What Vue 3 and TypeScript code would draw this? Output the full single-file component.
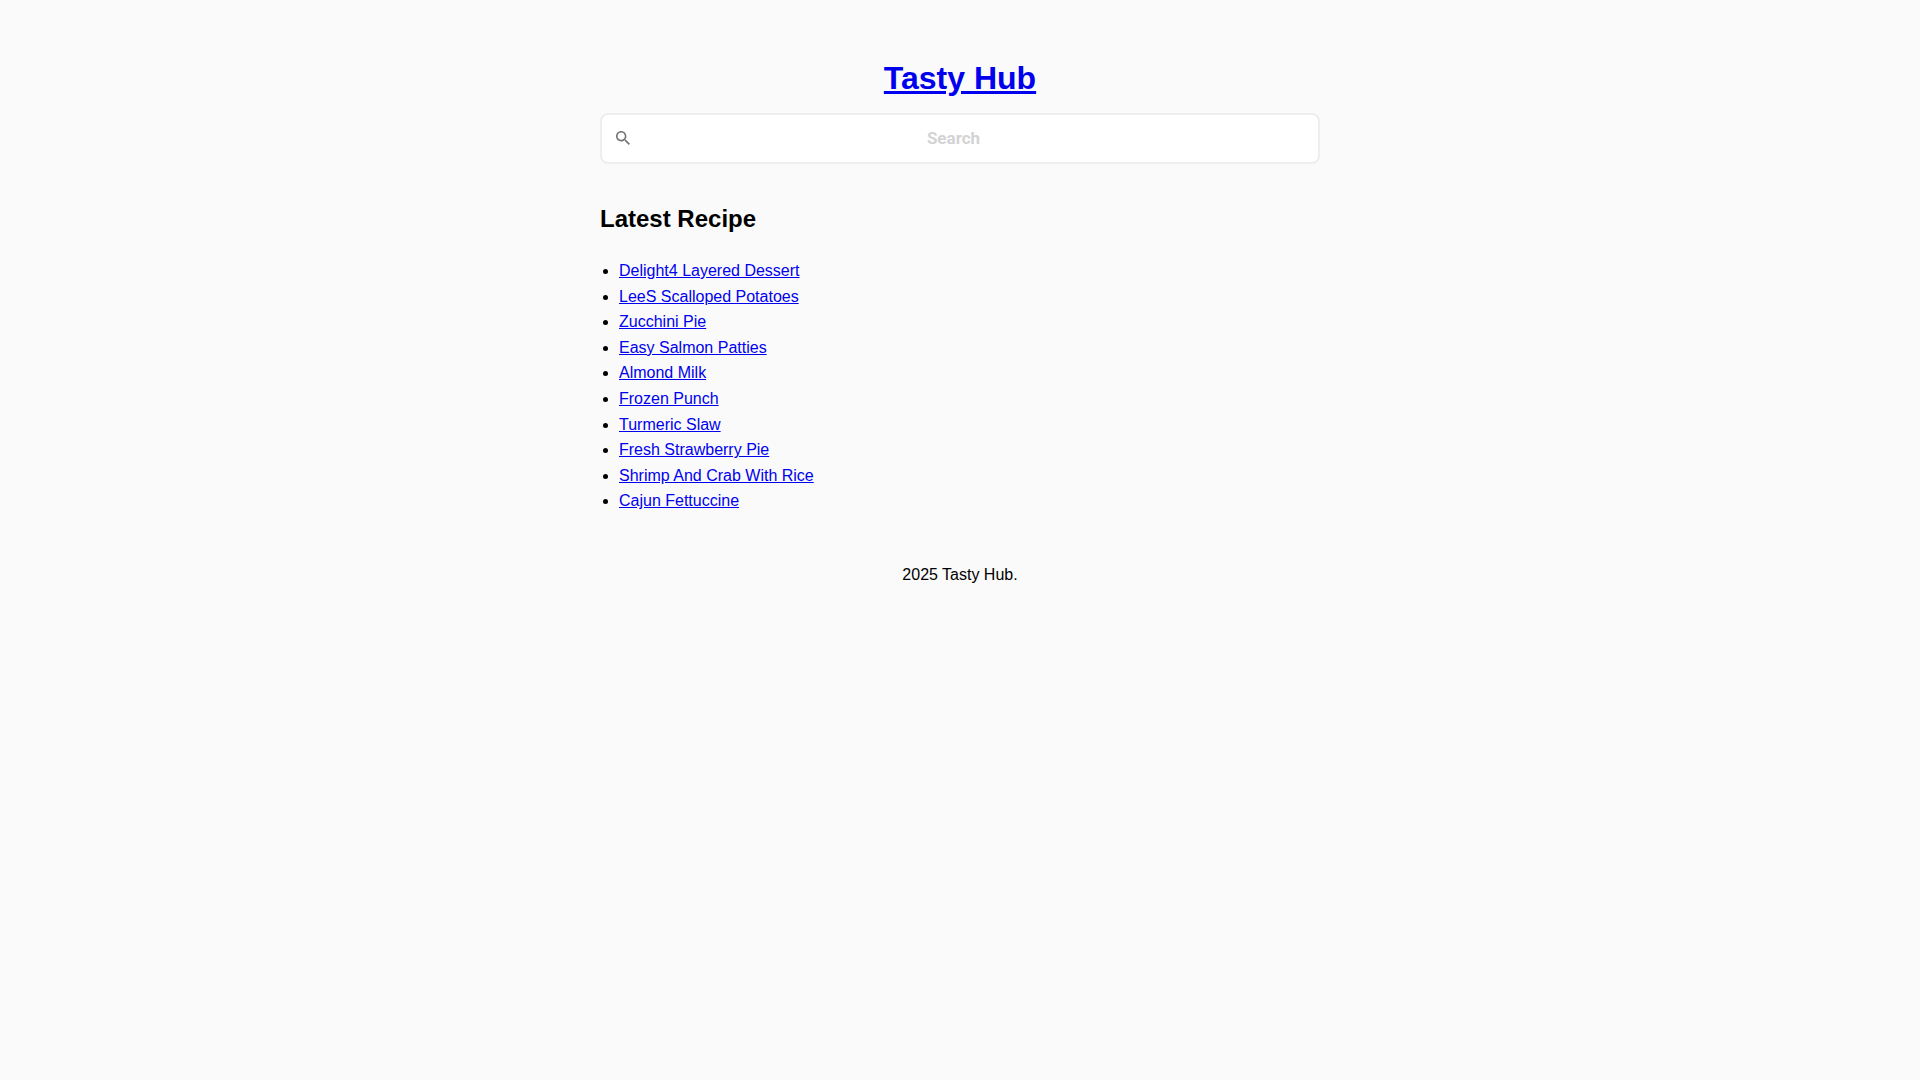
<script setup lang="ts">
import { ref } from 'vue'

const query = ref<string>('')
const recipes: string[] = [
  'Delight4 Layered Dessert',
  'LeeS Scalloped Potatoes',
  'Zucchini Pie',
  'Easy Salmon Patties',
  'Almond Milk',
  'Frozen Punch',
  'Turmeric Slaw',
  'Fresh Strawberry Pie',
  'Shrimp And Crab With Rice',
  'Cajun Fettuccine',
]
</script>

<template>
  <div class="page">
    <header>
      <h1 class="brand"><a href="#">Tasty Hub</a></h1>
      <form class="search" role="search" @submit.prevent>
        <button class="search-button" type="submit" aria-label="Submit search">
          <svg viewBox="3 3 17.49 17.49" width="14" height="14" aria-hidden="true">
            <path
              d="M15.5 14h-.79l-.28-.27C15.41 12.59 16 11.11 16 9.5 16 5.91 13.09 3 9.5 3S3 5.91 3 9.5 5.91 16 9.5 16c1.61 0 3.09-.59 4.23-1.57l.27.28v.79l5 4.99L20.49 19l-4.99-5zm-6 0C7.01 14 5 11.99 5 9.5S7.01 5 9.5 5 14 7.01 14 9.5 11.99 14 9.5 14z"
            />
          </svg>
        </button>
        <input v-model="query" class="search-input" type="text" placeholder="Search" aria-label="Search" />
      </form>
    </header>
    <main>
      <h2 class="heading">Latest Recipe</h2>
      <ul class="recipes">
        <li v-for="recipe in recipes" :key="recipe"><a href="#">{{ recipe }}</a></li>
      </ul>
    </main>
    <footer class="footer">2025 Tasty Hub.</footer>
  </div>
</template>

<style>
body {
  background: #fafafa;
}
</style>

<style scoped>
.page {
  box-sizing: border-box;
  max-width: 760px;
  margin: 0 auto;
  padding: 58px 20px 20px;
  color: #000;
  font: 16px/1.6 "Liberation Sans", Arial, sans-serif;
}
a {
  color: #0000ee;
  text-decoration: underline;
}
.brand {
  margin: 0 0 15px;
  font-size: 32px;
  line-height: 40px;
  text-align: center;
}
.search {
  display: flex;
  align-items: center;
  box-sizing: border-box;
  height: 51px;
  padding: 0 13px;
  border: 2px solid #eee;
  border-radius: 8px;
  background: #fff;
}
.search-button {
  display: flex;
  padding: 0 1px 1px;
  border: 0;
  background: none;
  fill: #757575;
  cursor: pointer;
}
.search-input {
  flex: 1;
  min-width: 0;
  padding: 0 29px 1px 0;
  border: 0;
  outline: 0;
  background: none;
  color: #222;
  font: bold 17px Roboto, sans-serif;
  text-align: center;
}
.search-input::placeholder {
  color: #d3d3d3;
  opacity: 1;
}
.heading {
  margin: 36px 0 20px;
  font-size: 24px;
  line-height: 38px;
}
.recipes {
  margin: 0;
  padding-left: 19px;
}
.footer {
  margin-top: 48px;
  text-align: center;
}
</style>
